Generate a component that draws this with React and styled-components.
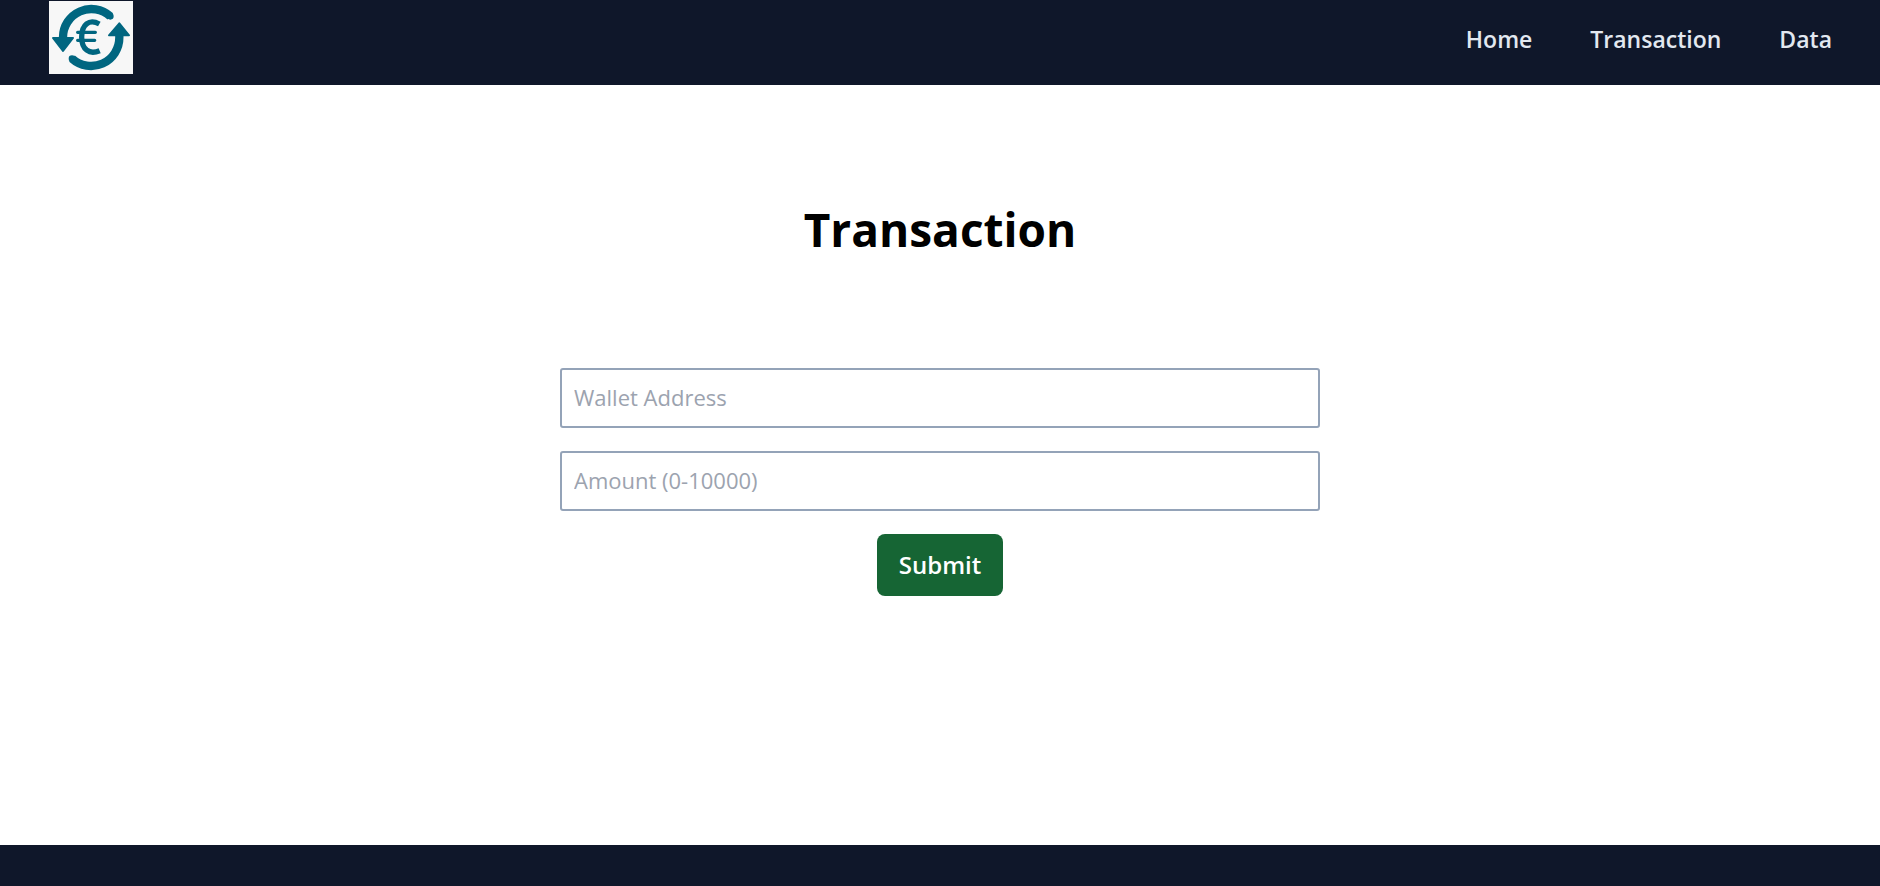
import React from "react";
import styled, { createGlobalStyle } from "styled-components";

const GlobalStyle = createGlobalStyle`
  *, *::before, *::after { box-sizing: border-box; }
  body {
    margin: 0;
    background: #ffffff;
    color: #000000;
    font-family: "Segoe UI", "Open Sans", "Noto Sans", sans-serif;
  }
`;

const Page = styled.div`
  display: flex;
  flex-direction: column;
  min-height: 100vh;
`;

const Header = styled.header`
  display: flex;
  justify-content: space-between;
  align-items: flex-start;
  padding: 1px 48px 11px 49px;
  background: #0f172a;
`;

const LogoLink = styled.a`
  display: block;
  line-height: 0;
`;

const LogoImage = styled.svg`
  width: 84px;
  height: 73px;
  background: #f7f7f7;
`;

const Nav = styled.nav`
  display: flex;
  gap: 58px;
  padding-top: 20px;
`;

const NavLink = styled.a`
  color: #e2e8f0;
  font-size: 23px;
  font-weight: 600;
  line-height: 36px;
  text-decoration: none;
`;

const Main = styled.main`
  flex: 1;
  display: flex;
  flex-direction: column;
  align-items: center;
  padding: 114px 24px 0;
`;

const Title = styled.h1`
  margin: 0 0 109px;
  font-size: 46px;
  font-weight: 700;
  line-height: 60px;
`;

const Form = styled.form`
  display: flex;
  flex-direction: column;
  align-items: center;
  gap: 23px;
  width: 100%;
  max-width: 760px;
`;

const Field = styled.input`
  width: 100%;
  height: 60px;
  padding: 0 12px 2px;
  border: 2px solid #94a3b8;
  border-radius: 3px;
  background: #ffffff;
  color: #000000;
  font-family: inherit;
  font-size: 22px;

  &::placeholder {
    color: #9ca3af;
    opacity: 1;
  }
`;

const SubmitButton = styled.button`
  padding: 13px 22px;
  border: 0;
  border-radius: 8px;
  background: #166534;
  color: #ffffff;
  font-family: inherit;
  font-size: 24px;
  font-weight: 600;
  line-height: 36px;
  cursor: pointer;
`;

const Footer = styled.footer`
  height: 41px;
  background: #0f172a;
`;

function Logo() {
  return (
    <LogoImage viewBox="0 0 252 219" aria-hidden="true">
      <g fill="none" stroke="#006680">
        <path d="M42 112V109A85 85 0 0 1 184 46" strokeWidth="25" />
        <path d="M211 102V109A85 85 0 0 1 69 173" strokeWidth="25" />
        <path
          d="M151 69C120 52 98 72 98 108C98 146 121 162 152 149"
          strokeWidth="16"
        />
        <path d="M86 94H139M86 118H137" strokeWidth="10" strokeLinecap="round" />
      </g>
      <g fill="#006680" stroke="#006680" strokeWidth="6" strokeLinejoin="round">
        <path d="M12 111H72L42 150Z" />
        <path d="M180 103H240L211 67Z" />
        <circle cx="184" cy="46" r="7" />
        <circle cx="69" cy="173" r="7" />
      </g>
    </LogoImage>
  );
}

export default function App() {
  return (
    <>
      <GlobalStyle />
      <Page>
        <Header>
          <LogoLink href="#home" aria-label="Home page">
            <Logo />
          </LogoLink>
          <Nav>
            <NavLink href="#home">Home</NavLink>
            <NavLink href="#transaction">Transaction</NavLink>
            <NavLink href="#data">Data</NavLink>
          </Nav>
        </Header>
        <Main>
          <Title>Transaction</Title>
          <Form onSubmit={(event) => event.preventDefault()}>
            <Field type="text" aria-label="Wallet Address" placeholder="Wallet Address" />
            <Field
              type="text"
              inputMode="numeric"
              aria-label="Amount (0-10000)"
              placeholder="Amount (0-10000)"
            />
            <SubmitButton type="submit">Submit</SubmitButton>
          </Form>
        </Main>
        <Footer />
      </Page>
    </>
  );
}
